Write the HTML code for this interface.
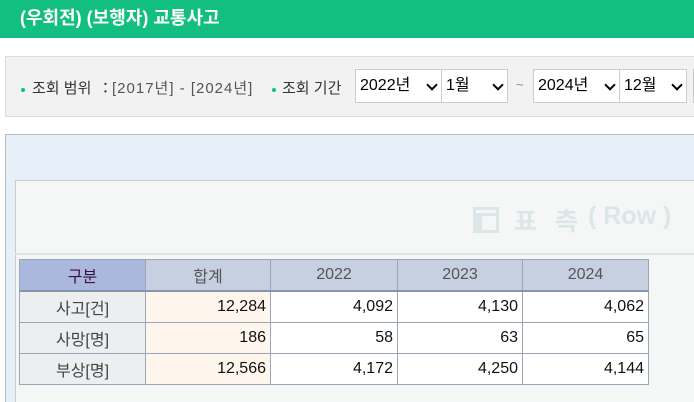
<!DOCTYPE html><html><head><meta charset="utf-8"><style>
html,body{margin:0;width:694px;height:402px;overflow:hidden}
body{background:#fff;font-family:"Liberation Sans","Noto Sans CJK KR",sans-serif;position:relative}
.hd{position:absolute;left:0;top:0;width:694px;height:38px;background:#13bf80;color:#fff;font-size:18px;font-weight:bold;line-height:36px;padding-left:20px;box-sizing:border-box}
.flt{position:absolute;left:5px;top:56px;width:689px;height:61px;background:#f2f2f2;border:1px solid #ddd;border-right:none;box-sizing:border-box;font-size:15px;color:#333;overflow:hidden}
.dot{position:absolute;width:4px;height:4px;border-radius:2px;background:#13bf80}
.t{position:absolute;top:20px;white-space:nowrap}
.sel{position:absolute;top:12px;height:34px;background:#fff;border:1px solid #ccc;box-sizing:border-box;font-size:16px;color:#000;line-height:32px;padding-left:4px}
.sel i{position:absolute;right:5px;top:11px;width:6px;height:6px;border-right:2px solid #000;border-bottom:2px solid #000;transform:rotate(45deg)}
.pn{position:absolute;left:5px;top:134px;width:689px;height:268px;background:#e7f0f9;border:1px solid #b5bcc4;border-right:none;border-bottom:none;box-sizing:border-box}
.in{position:absolute;left:15px;top:180px;width:679px;height:222px;background:#f5f7f7;border:1px solid #c8ccd0;border-right:none;border-bottom:none;box-sizing:border-box}
.ln{position:absolute;left:15px;top:253px;width:679px;height:2px;background:#dfe3e5}
.wm{position:absolute;top:202px;font-size:25px;font-weight:bold;color:#dce6e9;white-space:nowrap}
.ic{position:absolute;left:473px;top:207px;width:26px;height:26px;border:3px solid #dce6e9;box-sizing:border-box}
.ic:before{content:"";position:absolute;left:0;top:3px;width:20px;height:3px;background:#dce6e9}
.ic:after{content:"";position:absolute;left:0;top:6px;width:6px;height:14px;background:#dce6e9}
table{position:absolute;left:19px;top:259px;border-collapse:collapse;font-size:16px}
td{border:1px solid #9aa5b8;height:30px;padding:0 4px;text-align:right;background:#fff;color:#111}
tr.h td{background:#c7d0e0;text-align:center;color:#555;height:30px;border-bottom:2px solid #8894a8}
tr.h td.f{background:#a9b8dc;color:#3a1040}
td.c{background:#eceef0;text-align:center;color:#444}
td.s{background:#fef6ec}
</style></head><body>
<div class="hd">(우회전) (보행자) 교통사고</div>
<div class="flt">
<div class="dot" style="left:15px;top:31px"></div><span class="t" style="left:26px">조회 범위</span><span class="t" style="left:92px">：</span><span class="t" style="left:106px;color:#555;letter-spacing:1px">[2017년] - [2024년]</span>
<div class="dot" style="left:266px;top:31px"></div><span class="t" style="left:276px">조회 기간</span>
<div class="sel" style="left:349px;width:87px">2022년<i></i></div>
<div class="sel" style="left:435px;width:67px">1월<i></i></div>
<span class="t" style="left:510px;color:#888;font-size:13px">~</span>
<div class="sel" style="left:527px;width:87px">2024년<i></i></div>
<div class="sel" style="left:613px;width:68px">12월<i></i></div>
<div class="sel" style="left:687px;width:20px"></div>
</div>
<div class="pn"></div><div class="in"></div><div class="ln"></div>
<div class="ic"></div>
<div class="wm" style="left:514px">표</div>
<div class="wm" style="left:555px">측</div>
<div class="wm" style="left:588px">( Row )</div>
<table>
<tr class="h"><td class="f" style="width:117px">구분</td><td style="width:116px">합계</td><td style="width:118px">2022</td><td style="width:116px">2023</td><td style="width:117px">2024</td></tr>
<tr><td class="c">사고[건]</td><td class="s">12,284</td><td>4,092</td><td>4,130</td><td>4,062</td></tr>
<tr><td class="c">사망[명]</td><td class="s">186</td><td>58</td><td>63</td><td>65</td></tr>
<tr><td class="c">부상[명]</td><td class="s">12,566</td><td>4,172</td><td>4,250</td><td>4,144</td></tr>
</table>
</body></html>
